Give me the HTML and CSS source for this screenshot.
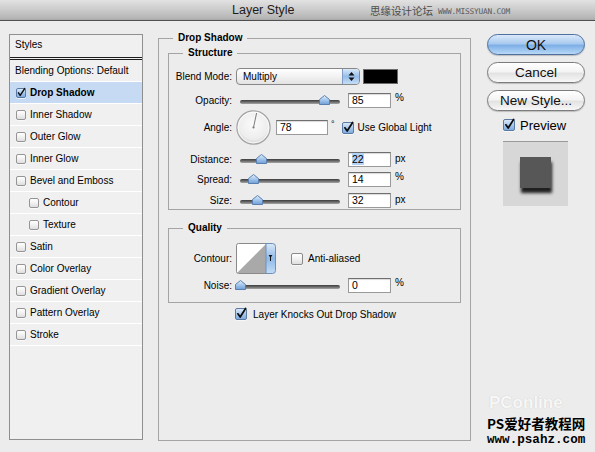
FILE: index.html
```html
<!DOCTYPE html>
<html>
<head>
<meta charset="utf-8">
<title>Layer Style</title>
<link rel="stylesheet" href="styles.css">
</head>
<body>
<div class="window">
  <svg class="defs" width="0" height="0" aria-hidden="true">
    <defs>
      <linearGradient id="gThumb" x1="0" y1="0" x2="0" y2="1">
        <stop offset="0" stop-color="#e4effa"/>
        <stop offset="0.55" stop-color="#9fc3ea"/>
        <stop offset="1" stop-color="#6f9fd6"/>
      </linearGradient>
      <linearGradient id="gBlue" x1="0" y1="0" x2="0" y2="1">
        <stop offset="0" stop-color="#d9e8f8"/>
        <stop offset="0.5" stop-color="#8fb9e8"/>
        <stop offset="1" stop-color="#c3dcf5"/>
      </linearGradient>
      <radialGradient id="gDial" cx="50%" cy="40%" r="60%">
        <stop offset="0" stop-color="#fbfbfb"/>
        <stop offset="0.75" stop-color="#ededed"/>
        <stop offset="1" stop-color="#d2d2d2"/>
      </radialGradient>
    </defs>
  </svg>

  <div class="titlebar">
    <span class="title">Layer Style</span>
    <span class="wm-top"><span class="wm-cn">思缘设计论坛</span><span class="wm-url">WWW.MISSYUAN.COM</span></span>
  </div>

  <div class="content">
    <div class="styles-panel">
      <div class="sp-head">Styles</div>
      <div class="sp-row">Blending Options: Default</div>
      <div class="sp-row selected"><span class="cb sm checked"><svg viewBox="0 0 10 10"><path d="M1.8 4.8 L4 8 L9.6 -0.5" /></svg></span><b>Drop Shadow</b></div>
      <div class="sp-row"><span class="cb sm"></span>Inner Shadow</div>
      <div class="sp-row"><span class="cb sm"></span>Outer Glow</div>
      <div class="sp-row"><span class="cb sm"></span>Inner Glow</div>
      <div class="sp-row"><span class="cb sm"></span>Bevel and Emboss</div>
      <div class="sp-row sub"><span class="cb sm"></span>Contour</div>
      <div class="sp-row sub"><span class="cb sm"></span>Texture</div>
      <div class="sp-row"><span class="cb sm"></span>Satin</div>
      <div class="sp-row"><span class="cb sm"></span>Color Overlay</div>
      <div class="sp-row"><span class="cb sm"></span>Gradient Overlay</div>
      <div class="sp-row"><span class="cb sm"></span>Pattern Overlay</div>
      <div class="sp-row"><span class="cb sm"></span>Stroke</div>
    </div>

    <fieldset class="main">
      <legend>Drop Shadow</legend>

      <fieldset class="group structure">
        <legend>Structure</legend>
        <div class="row r-blend">
          <span class="lbl">Blend Mode:</span>
          <div class="select"><span class="sel-text">Multiply</span><span class="stepper"><svg width="7" height="11" viewBox="0 0 7 11"><path d="M3.5 1 L6.5 4.5 L0.5 4.5 Z M3.5 10 L6.5 6.5 L0.5 6.5 Z" fill="#111"/></svg></span></div>
          <span class="swatch"></span>
        </div>
        <div class="row r-opacity">
          <span class="lbl">Opacity:</span>
          <div class="slider"><div class="track"></div><svg class="thumb" style="left:79px" width="11" height="10" viewBox="0 0 11 10"><path d="M5.5 0.5 L10.5 4.5 L10.5 9.5 L0.5 9.5 L0.5 4.5 Z" fill="url(#gThumb)" stroke="#5a7fae" stroke-linejoin="round"/></svg></div>
          <span class="field w43">85</span>
          <span class="unit up">%</span>
        </div>
        <div class="row r-angle">
          <span class="lbl">Angle:</span>
          <svg class="dial" width="35" height="35" viewBox="0 0 35 35"><circle cx="17.5" cy="17.5" r="16.6" fill="url(#gDial)" stroke="#a3a3a3" stroke-width="1.2"/><circle cx="17.5" cy="17.5" r="15.4" fill="none" stroke="#fff" stroke-width="0.8"/><line x1="17.5" y1="17.5" x2="20.6" y2="3" stroke="#7a7a7a" stroke-width="1"/><circle cx="17.5" cy="17.5" r="1.1" fill="#7a7a7a"/></svg>
          <span class="field w52">78</span>
          <span class="unit deg">°</span>
          <span class="cb checked gl"><svg viewBox="0 0 12 12"><path d="M2.3 5.8 L5 9.6 L11.5 -0.6" /></svg></span>
          <span class="cb-text">Use Global Light</span>
        </div>
        <div class="row r-distance">
          <span class="lbl">Distance:</span>
          <div class="slider"><div class="track"></div><svg class="thumb" style="left:16px" width="11" height="10" viewBox="0 0 11 10"><path d="M5.5 0.5 L10.5 4.5 L10.5 9.5 L0.5 9.5 L0.5 4.5 Z" fill="url(#gThumb)" stroke="#5a7fae" stroke-linejoin="round"/></svg></div>
          <span class="field w43"><span class="selected-text">22</span></span>
          <span class="unit">px</span>
        </div>
        <div class="row r-spread">
          <span class="lbl">Spread:</span>
          <div class="slider"><div class="track"></div><svg class="thumb" style="left:8px" width="11" height="10" viewBox="0 0 11 10"><path d="M5.5 0.5 L10.5 4.5 L10.5 9.5 L0.5 9.5 L0.5 4.5 Z" fill="url(#gThumb)" stroke="#5a7fae" stroke-linejoin="round"/></svg></div>
          <span class="field w43">14</span>
          <span class="unit up">%</span>
        </div>
        <div class="row r-size">
          <span class="lbl">Size:</span>
          <div class="slider"><div class="track"></div><svg class="thumb" style="left:12px" width="11" height="10" viewBox="0 0 11 10"><path d="M5.5 0.5 L10.5 4.5 L10.5 9.5 L0.5 9.5 L0.5 4.5 Z" fill="url(#gThumb)" stroke="#5a7fae" stroke-linejoin="round"/></svg></div>
          <span class="field w43">32</span>
          <span class="unit">px</span>
        </div>
      </fieldset>

      <fieldset class="group quality">
        <legend>Quality</legend>
        <div class="row r-contour">
          <span class="lbl">Contour:</span>
          <svg class="contour" width="40" height="31" viewBox="0 0 40 31"><rect x="0.5" y="0.5" width="36" height="30" rx="2" fill="#fff" stroke="#8a8a8a"/><path d="M1 30 L30 1 L30 30 Z" fill="#a9a9a9"/><path d="M30 0.5 L36.5 0.5 Q39.5 0.5 39.5 3.5 L39.5 27.5 Q39.5 30.5 36.5 30.5 L30 30.5 Z" fill="url(#gBlue)" stroke="#6f8fb8"/><path d="M32.6 12 L36.4 12 L34.5 15 Z" fill="#111"/><rect x="34" y="14" width="1" height="4" fill="#111"/></svg>
          <span class="cb aa"></span>
          <span class="cb-text aa-text">Anti-aliased</span>
        </div>
        <div class="row r-noise">
          <span class="lbl">Noise:</span>
          <div class="slider"><div class="track"></div><svg class="thumb" style="left:-5px" width="11" height="10" viewBox="0 0 11 10"><path d="M5.5 0.5 L10.5 4.5 L10.5 9.5 L0.5 9.5 L0.5 4.5 Z" fill="url(#gThumb)" stroke="#5a7fae" stroke-linejoin="round"/></svg></div>
          <span class="field w43">0</span>
          <span class="unit up">%</span>
        </div>
      </fieldset>

      <div class="knock">
        <span class="cb checked"><svg viewBox="0 0 12 12"><path d="M2.3 5.8 L5 9.6 L11.5 -0.6" /></svg></span>
        <span class="cb-text">Layer Knocks Out Drop Shadow</span>
      </div>
    </fieldset>

    <div class="side">
      <div class="btn default">OK</div>
      <div class="btn">Cancel</div>
      <div class="btn">New Style...</div>
      <div class="preview-row">
        <span class="cb checked"><svg viewBox="0 0 12 12"><path d="M2.3 5.8 L5 9.6 L11.5 -0.6" /></svg></span>
        <span class="pv-text">Preview</span>
      </div>
      <div class="preview"><div class="pv-square"></div></div>
    </div>
  </div>

  <div class="wm-bottom">
    <div class="wm-logo">PConline</div>
    <div class="wm-cn2">PS爱好者教程网</div>
    <div class="wm-url2">www.psahz.com</div>
  </div>
</div>
</body>
</html>
```

FILE: styles.css
```css
* { box-sizing: border-box; }
html, body { margin: 0; padding: 0; }
body {
  width: 595px;
  height: 452px;
  overflow: hidden;
  background: #ececec;
  font-family: "Liberation Sans", Arial, sans-serif;
  font-size: 10px;
  color: #000;
}
.window { position: relative; width: 595px; height: 452px; }
.defs { display: block; width: 0; height: 0; }

/* title bar */
.titlebar {
  position: relative;
  height: 21px;
  background: linear-gradient(#e2e2e2, #cdcdcd 45%, #b6b6b6 90%, #a8a8a8);
  border-bottom: 1px solid #4f4f4f;
  display: flex;
  align-items: center;
  padding-left: 232px;
}
.title { font-size: 12.5px; color: #1c1c1c; }
.wm-top {
  position: absolute;
  left: 370px;
  top: 4px;
  display: flex;
  align-items: flex-end;
  gap: 5px;
}
.wm-cn { font-family: "Noto Sans CJK SC", sans-serif; font-size: 10.5px; line-height: 14px; color: #4c4c4c; }
.wm-url { font-family: "DejaVu Sans Mono", monospace; font-size: 7.8px; line-height: 10px; color: #5a5a5a; letter-spacing: -0.2px; margin-bottom: 1px; }

/* layout */
.content { display: flex; align-items: flex-start; padding: 11px 0 0 9px; }

/* styles list */
.styles-panel {
  margin-top: 2px;
  width: 134px;
  height: 406px;
  border: 1px solid #8f8f8f;
  background: #f0f0f0;
  flex: none;
}
.sp-head {
  height: 25px;
  padding: 0 0 3px 5px;
  display: flex;
  align-items: center;
  border-bottom: 3px double #1e1e1e;
}
.sp-row {
  height: 22px;
  border-bottom: 1px solid #ffffff;
  display: flex;
  align-items: center;
  gap: 4px;
  padding-left: 5px;
  white-space: nowrap;
}
.sp-row .cb { margin-left: 1px; }
.sp-row.sub { padding-left: 18px; }
.sp-row.selected { background: #c6daf4; }

/* checkboxes */
.cb {
  display: inline-block;
  flex: none;
  width: 12px;
  height: 12px;
  border: 1px solid #8a8a8a;
  border-radius: 2px;
  background: linear-gradient(#ffffff, #f1f1f1 50%, #dedede);
  box-shadow: 0 1px 0 rgba(255,255,255,0.6);
}
.cb.sm { width: 10px; height: 10px; border-color: #959595; }
.cb.checked {
  background: linear-gradient(#dbe8f7, #a7c7ec 50%, #7fabdf);
  border-color: #5b7aa3;
}
.cb svg { display: block; width: 100%; height: 100%; overflow: visible; }
.cb svg path { fill: none; stroke: #0d0d0d; stroke-width: 2.1; stroke-linecap: round; stroke-linejoin: round; }
.cb.sm svg path { stroke-width: 1.8; }

/* fieldsets */
fieldset { margin: 0; border: 1px solid #a4a4a4; min-width: 0; }
legend { padding: 0 5px; font-weight: bold; font-size: 10px; line-height: 12px; }
.main {
  margin-left: 15px;
  width: 313px;
  height: 409px;
  padding: 0 9px;
  flex: none;
}
.main > legend { margin-left: 5px; }
.group { padding: 0; }
.group > legend { margin-left: 14px; }
.structure { margin-top: 3px; padding-top: 8px; height: 163px; }
.quality { margin-top: 12px; padding-top: 9px; padding-bottom: 9px; }

.row { display: flex; align-items: center; height: 16px; white-space: nowrap; }
.lbl { width: 63px; flex: none; text-align: right; }
.r-blend { height: 18px; }
.r-opacity { margin-top: 7px; }
.r-angle { height: 35px; margin-top: 2px; }
.r-distance { margin-top: 6px; }
.r-spread { margin-top: 4px; }
.r-size { margin-top: 5px; }
.r-contour { height: 31px; }
.r-noise { margin-top: 3px; }

.select {
  margin-left: 4px;
  width: 124px;
  height: 17px;
  border: 1px solid #878787;
  border-radius: 4px;
  background: linear-gradient(#ffffff, #f2f2f2 50%, #e2e2e2);
  display: flex;
  align-items: center;
  overflow: hidden;
  flex: none;
}
.sel-text { flex: 1; padding-left: 6px; }
.stepper {
  width: 17px;
  height: 100%;
  border-left: 1px solid #7f9cc4;
  background: linear-gradient(#dae9f8, #96bde9 50%, #c6def6);
  display: flex;
  align-items: center;
  justify-content: center;
}
.stepper svg { display: block; }
.swatch {
  margin-left: 3px;
  width: 35px;
  height: 15px;
  background: #000;
  border: 1px solid #6a6a6a;
  flex: none;
}

.slider { position: relative; margin-left: 8px; width: 100px; height: 10px; flex: none; }
.track {
  margin-top: 5px;
  height: 4px;
  border-radius: 2px;
  background: linear-gradient(#3c3c3c, #6b6b6b 50%, #a6a6a6);
}
.thumb { position: absolute; top: 0; display: block; }

.field {
  flex: none;
  height: 15px;
  margin-left: 8px;
  background: #fff;
  border: 1px solid #9a9a9a;
  border-top-color: #6f6f6f;
  box-shadow: inset 0 1px 1px rgba(0,0,0,0.15);
  padding-left: 3px;
  font-size: 10.5px;
  line-height: 13px;
}
.w43 { width: 43px; }
.w52 { width: 52px; margin-left: 5px; }
.selected-text { background: #b5d3f7; }
.unit { margin-left: 4px; font-size: 10px; }
.unit.up { align-self: flex-start; line-height: 11px; }
.r-size .unit, .r-distance .unit { margin-top: -2px; }
.deg { align-self: flex-start; margin-top: 9px; margin-left: 3px; font-size: 9px; }
.dial { display: block; margin-left: 4px; flex: none; }
.gl { margin-left: 7px; }
.cb-text { margin-left: 4px; }

.contour { display: block; margin-left: 4px; flex: none; }
.aa { margin-left: 15px; }
.aa-text { margin-left: 5px; }

.knock {
  margin-top: 5px;
  display: flex;
  align-items: center;
  justify-content: center;
  height: 12px;
  padding-left: 2px;
}
.knock .cb-text { margin-left: 6px; }

/* right column */
.side { margin-left: 16px; margin-top: 2px; width: 98px; flex: none; }
.btn {
  height: 21px;
  margin-bottom: 7px;
  border: 1px solid #7c7c7c;
  border-radius: 11px;
  background: linear-gradient(#ffffff, #f4f4f4 45%, #e3e3e3 55%, #f7f7f7);
  box-shadow: 0 1px 1px rgba(0,0,0,0.2);
  display: flex;
  align-items: center;
  justify-content: center;
  font-size: 13.5px;
  color: #111;
}
.btn.default {
  border-color: #4f6f9e;
  background: linear-gradient(#dbe9f9, #a9caef 45%, #7eafe7 55%, #b8d8f6);
  font-size: 14px;
}
.preview-row { display: flex; align-items: center; height: 14px; padding-left: 16px; }
.pv-text { margin-left: 5px; font-size: 13px; }
.preview {
  margin: 9px 0 0 16px;
  width: 65px;
  height: 65px;
  background: #d7d7d7;
  border-top: 1px solid #9a9a9a;
  display: flex;
  align-items: center;
  justify-content: center;
}
.pv-square {
  width: 31px;
  height: 31px;
  background: #575757;
  box-shadow: 1px 5px 3px rgba(0,0,0,0.85);
  margin-top: -4px;
}

/* bottom watermark (overlay) */
.wm-bottom {
  position: absolute;
  left: 487px;
  top: 393px;
  width: 100px;
}
.wm-logo {
  font-family: "Liberation Sans", sans-serif;
  font-size: 17px;
  font-weight: bold;
  line-height: 20px;
  color: rgba(255,255,255,0.9);
  text-shadow: 0 0 1px #bdbdbd;
  padding-left: 2px;
}
.wm-cn2 {
  font-family: "Noto Sans CJK SC", sans-serif;
  font-weight: bold;
  font-size: 13.5px;
  line-height: 20px;
  color: #000;
  white-space: nowrap;
}
.wm-url2 {
  font-family: "Liberation Mono", monospace;
  font-weight: bold;
  font-size: 12.6px;
  line-height: 14px;
  color: #000;
  white-space: nowrap;
}
```
